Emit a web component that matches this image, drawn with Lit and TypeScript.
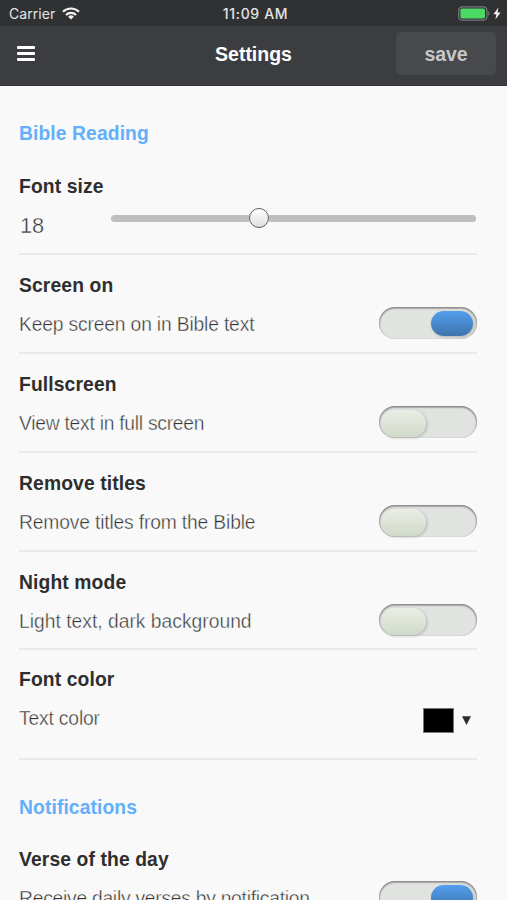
import { LitElement, html, css } from "lit";
import { customElement, property } from "lit/decorators.js";
import { classMap } from "lit/directives/class-map.js";

@customElement("status-bar")
class StatusBar extends LitElement {
  static styles = css`
    :host {
      display: grid;
      flex: none;
      grid-template-columns: 1fr auto 1fr;
      align-items: center;
      height: 26px;
      padding: 0 6px 0 9px;
      background: #2f3133;
      color: #e4e5e6;
      font: 400 14px/26px Inter, sans-serif;
    }
    .left, .right { display: flex; align-items: center; }
    .left { gap: 7px; height: 26px; }
    .carrier { letter-spacing: 0.05px; padding-top: 1px; }
    .time { font-weight: 500; font-size: 14px; letter-spacing: 0.65px; padding: 1px 0 0 1px; line-height: 25px; }
    .right { justify-content: flex-end; gap: 3px; }
    svg { display: block; }
  `;
  render() {
    return html`
      <div class="left">
        <span class="carrier">Carrier</span>
        <svg width="18" height="13" viewBox="0 0 18 13" fill="none" stroke="#f4f4f4" stroke-width="2.2">
          <path d="M1 4.8a11.3 11.3 0 0 1 16 0" />
          <path d="M4 8a7.1 7.1 0 0 1 10 0" />
          <path d="M9 12.6 6.1 9.8a4.1 4.1 0 0 1 5.8 0z" fill="#f4f4f4" stroke="none" />
        </svg>
      </div>
      <span class="time">11:09 AM</span>
      <div class="right">
        <svg width="32" height="15" viewBox="0 0 32 15">
          <rect x="0.7" y="0.8" width="28.2" height="13.4" rx="3.6" fill="none" stroke="#77797b" stroke-width="1.3" />
          <rect x="2.4" y="2.5" width="24.6" height="10" rx="1.8" fill="#4cd964" />
          <path d="M30.1 5.2c1.8.8 1.8 3.8 0 4.6z" fill="#77797b" />
        </svg>
        <svg width="8" height="13" viewBox="0 0 8 13">
          <path d="M5.4.6.4 7.2h3L2.4 12.4 7.6 5.6H4.5z" fill="#f4f4f4" />
        </svg>
      </div>
    `;
  }
}

@customElement("nav-bar")
class NavBar extends LitElement {
  static styles = css`
    :host {
      display: grid;
      flex: none;
      grid-template-columns: 1fr auto 1fr;
      align-items: center;
      box-sizing: border-box;
      height: 60px;
      padding: 0 11px 4px 17px;
      background: #3c3d40;
      border-bottom: 1px solid #2f3032;
      font: 700 19.5px/26px "Liberation Sans", sans-serif;
      color: #fff;
    }
    .menu { width: 18px; padding: 0; border: 0; background: none; display: flex; flex-direction: column; gap: 3px; }
    .bar { height: 3px; border-radius: 1px; background: #fff; }
    .title { margin-left: -6px; padding-top: 1px; }
    .save {
      justify-self: end;
      width: 100px;
      height: 43px;
      padding: 1px 0 0;
      border: 0;
      border-radius: 5px;
      background: #48494c;
      color: #c6c7c9;
      font: inherit;
      letter-spacing: -0.1px;
    }
  `;
  render() {
    return html`
      <button class="menu" aria-label="Menu">
        <span class="bar"></span><span class="bar"></span><span class="bar"></span>
      </button>
      <span class="title">Settings</span>
      <button class="save">save</button>
    `;
  }
}

@customElement("toggle-switch")
class ToggleSwitch extends LitElement {
  @property({ type: Boolean }) on = false;
  static styles = css`
    :host { display: block; }
    .track {
      display: flex;
      box-sizing: border-box;
      width: 98px;
      height: 32px;
      padding: 4px 4px 3px 2px;
      border-radius: 16px;
      background: #e0e3e0;
      box-shadow: inset 0 1px 2px #808080, inset 0 1px 1px 1px #bcbcbc;
    }
    .knob {
      width: 45px;
      height: 27px;
      border-radius: 14px;
      background: linear-gradient(#eaeee6, #d0dac9);
      box-shadow: 1px 1px 3px rgba(0, 0, 0, 0.22);
    }
    .on { justify-content: flex-end; }
    .on .knob {
      width: 42px;
      height: 25px;
      background: linear-gradient(#539eec, #3d74ad);
    }
  `;
  render() {
    return html`<div class=${classMap({ track: true, on: this.on })}><div class="knob"></div></div>`;
  }
}

@customElement("app-root")
class AppRoot extends LitElement {
  static styles = css`
    :host {
      display: flex;
      flex-direction: column;
      height: 900px;
      overflow: hidden;
      background: #f9f9f9;
      font: 19.3px/24px "Liberation Sans", sans-serif;
    }
    .content { padding: 0 30px 0 19px; }
    .section { font-weight: 700; letter-spacing: 0.1px; color: #63aff9; padding-top: 36px; height: 50px; }
    .row { box-sizing: border-box; height: 99px; padding-top: 19px; border-bottom: 2px solid #e9e9e9; }
    .row.short { height: 98px; }
    .row.first { height: 83px; padding-top: 3px; }
    .row.tall { height: 110px; padding-top: 18px; }
    .row.verse { padding-top: 2px; }
    .title { font-weight: 700; letter-spacing: 0.12px; color: #2e2e2e; }
    .line { display: flex; justify-content: space-between; padding-top: 15px; height: 24px; }
    .text {
      color: #343434;
      letter-spacing: -0.17px;
      white-space: nowrap;
      -webkit-text-stroke: 0.4px #f9f9f9;
    }
    .tight .text, .verse .text { letter-spacing: -0.26px; }
    .loose .text { letter-spacing: 0; }
    .control { margin-top: -6px; }
    .first .line { padding-top: 14px; }
    .first .text.size { font-size: 21.8px; letter-spacing: 0; padding: 1px 0 0 1px; }
    .slider { display: flex; align-items: center; width: 365px; height: 20px; margin: -5px 1px 0 0; }
    .rail { height: 7px; background: #bfbfbf; }
    .rail.before { width: 138px; border-radius: 4px 0 0 4px; }
    .rail.after { flex: 1; border-radius: 0 4px 4px 0; }
    .thumb {
      box-sizing: border-box;
      width: 20px;
      height: 20px;
      border: 1.5px solid #5c5c5c;
      border-radius: 50%;
      background: linear-gradient(#fff, #dedede);
    }
    .picker { display: flex; align-items: center; gap: 8px; height: 25px; margin-top: 1px; padding-right: 6px; }
    .swatch { box-sizing: border-box; width: 31px; height: 25px; background: #000; border: 1px solid #777; }
  `;

  row(title: string, text: string, control: unknown, kind = "") {
    return html`
      <div class="row ${kind}">
        <div class="title">${title}</div>
        <div class="line"><span class="text">${text}</span>${control}</div>
      </div>
    `;
  }

  toggle(on: boolean) {
    return html`<toggle-switch class="control" ?on=${on}></toggle-switch>`;
  }

  render() {
    return html`
      <status-bar></status-bar>
      <nav-bar></nav-bar>
      <div class="content">
        <div class="section">Bible Reading</div>
        <div class="row first">
          <div class="title">Font size</div>
          <div class="line">
            <span class="text size">18</span>
            <div class="slider">
              <div class="rail before"></div>
              <div class="thumb"></div>
              <div class="rail after"></div>
            </div>
          </div>
        </div>
        ${this.row("Screen on", "Keep screen on in Bible text", this.toggle(true))}
        ${this.row("Fullscreen", "View text in full screen", this.toggle(false), "tight")}
        ${this.row("Remove titles", "Remove titles from the Bible", this.toggle(false))}
        ${this.row("Night mode", "Light text, dark background", this.toggle(false), "short loose")}
        ${this.row("Font color", "Text color", html`
          <div class="picker">
            <div class="swatch"></div>
            <svg width="9" height="9" viewBox="0 0 9 9"><path d="M0 .3h9L4.5 9z" fill="#2b2b2b" /></svg>
          </div>`, "tall")}
        <div class="section">Notifications</div>
        ${this.row("Verse of the day", "Receive daily verses by notification", this.toggle(true), "verse")}
      </div>
    `;
  }
}
